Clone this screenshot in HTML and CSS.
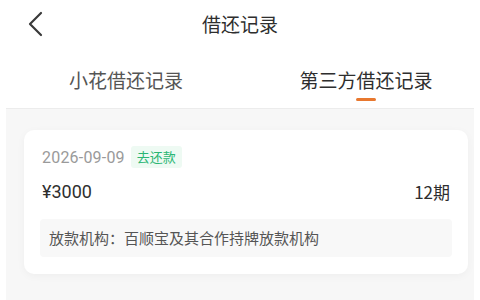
FILE: index.html
```html
<!DOCTYPE html>
<html lang="zh">
<head>
<meta charset="utf-8">
<link rel="stylesheet" href="styles.css">
</head>
<body>
<div class="page">
  <header class="nav">
    <span class="back">
      <svg width="16" height="26" viewBox="0 0 16 26"><path d="M14 2 L3 13 L14 24" fill="none" stroke="#3a3a3a" stroke-width="2.2" stroke-linecap="round" stroke-linejoin="round"/></svg>
    </span>
    <h1 class="title">借还记录</h1>
  </header>
  <nav class="tabs">
    <div class="tab">小花借还记录</div>
    <div class="tab active">第三方借还记录</div>
  </nav>
  <main class="content">
    <section class="card">
      <div class="row-date">
        <span class="date">2026-09-09</span>
        <span class="badge">去还款</span>
      </div>
      <div class="row-amount">
        <span class="amount">¥3000</span>
        <span class="term">12期</span>
      </div>
      <div class="org">放款机构：百顺宝及其合作持牌放款机构</div>
    </section>
  </main>
</div>
</body>
</html>
```
FILE: styles.css
```css
* { box-sizing: border-box; margin: 0; padding: 0; }
html, body { width: 480px; height: 300px; overflow: hidden; background: #fff; }
body { font-family: "Noto Sans CJK SC", "Noto Sans", sans-serif; color: #333; }
.page { display: flex; flex-direction: column; height: 300px; }
.nav { position: relative; height: 48px; display: flex; align-items: center; justify-content: center; }
.back { position: absolute; left: 27px; top: 11px; display: flex; }
.title { font-size: 19px; font-weight: 400; color: #2e2e2e; line-height: 1; margin-top: -2px; }
.tabs { display: grid; grid-template-columns: 1fr 1fr; height: 61px; border-bottom: 1px solid #ececec; margin: 0 6px; }
.tab { text-align: center; font-size: 19px; color: #555; padding-top: 22px; line-height: 1; position: relative; padding-left: 6px; }
.tab.active { color: #2e2e2e; padding-left: 18px; }
.tab.active::after { content: ""; position: absolute; left: 50%; margin-left: -1px; top: 50px; width: 20px; height: 3px; border-radius: 2px; background: #e8782f; }
.content { flex: 1; background: #f7f7f7; margin: 0 6px; padding: 21px 6px 0 18px; }
.card { background: #fff; border-radius: 10px; box-shadow: 0 2px 8px rgba(0,0,0,0.04); padding: 16px 18px 17px 18px; width: 444px; }
.row-date { display: flex; align-items: center; gap: 6px; height: 22px; }
.date { font-size: 16px; color: #9a9a9a; font-family: "Roboto", "Noto Sans", sans-serif; letter-spacing: 0.2px; }
.badge { font-size: 13px; color: #2bb673; background: #eefaf3; padding: 2px 6px; border-radius: 3px; line-height: 18px; }
.row-amount { display: flex; justify-content: space-between; align-items: center; margin-top: 13px; height: 20px; }
.amount { font-size: 18px; color: #2e2e2e; font-family: "Roboto", "Noto Sans", sans-serif; }
.term { font-size: 17px; color: #2e2e2e; }
.org { margin-top: 18px; background: #f8f8f8; border-radius: 4px; font-size: 15px; color: #555; padding: 10px 9px 10px 9px; margin-left: -2px; margin-right: -2px; line-height: 18px; }
```
